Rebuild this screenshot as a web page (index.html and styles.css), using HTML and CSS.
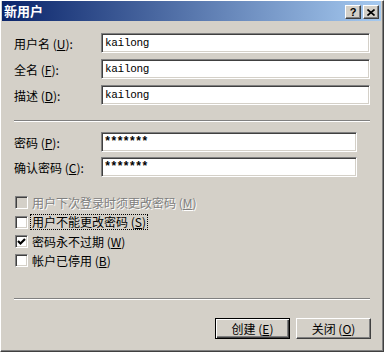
FILE: index.html
```html
<!DOCTYPE html>
<html lang="zh-CN">
<head>
  <meta charset="UTF-8" />
  <title>新用户</title>
  <link rel="stylesheet" href="styles.css">
</head>
<body>

<div class="window">
  <div class="title-bar">
    <span class="title">新用户</span>
    <div class="title-buttons">
      <span class="tbtn help">?</span>
      <span class="tbtn close">
        <svg width="8" height="7" viewBox="0 0 8 7"><path d="M0.5 0.5 L7.5 6.5 M7.5 0.5 L0.5 6.5" stroke="#000" stroke-width="1.6"/></svg>
      </span>
    </div>
  </div>

  <div class="content">
    <div class="group names">
      <div class="field"><label>用户名 (<u>U</u>):</label><div class="edit wide">kailong</div></div>
      <div class="field"><label>全名 (<u>F</u>):</label><div class="edit wide">kailong</div></div>
      <div class="field"><label>描述 (<u>D</u>):</label><div class="edit wide">kailong</div></div>
    </div>

    <div class="sep top"></div>

    <div class="group pw">
      <div class="field"><label>密码 (<u>P</u>):</label><div class="edit narrow stars">*******</div></div>
      <div class="field"><label>确认密码 (<u>C</u>):</label><div class="edit narrow stars">*******</div></div>
    </div>

    <div class="checks">
      <div class="check disabled"><span class="cb"></span><span class="text">用户下次登录时须更改密码 (<u>M</u>)</span></div>
      <div class="check"><span class="cb"></span><span class="text focus">用户不能更改密码 (<u>S</u>)</span></div>
      <div class="check"><span class="cb"><svg width="9" height="9" viewBox="0 0 9 9"><path d="M1 4 L3.5 6.5 L8 2" fill="none" stroke="#000" stroke-width="2.2"/></svg></span><span class="text">密码永不过期 (<u>W</u>)</span></div>
      <div class="check"><span class="cb"></span><span class="text">帐户已停用 (<u>B</u>)</span></div>
    </div>

    <div class="sep bottom"></div>

    <div class="buttons">
      <div class="btn default">创建 (<u>E</u>)</div>
      <div class="btn">关闭 (<u>O</u>)</div>
    </div>
  </div>
</div>

</body>
</html>
```

FILE: styles.css
```css
* { margin: 0; padding: 0; box-sizing: border-box; }

body {
  width: 384px;
  height: 352px;
  overflow: hidden;
  font-family: "Noto Sans CJK SC", "Noto Sans", sans-serif;
  font-size: 12px;
  color: #000;
  background: #d4d0c8;
}

.window {
  width: 384px;
  height: 352px;
  background: #d4d0c8;
  border: 1px solid;
  border-color: #fff #404040 #404040 #fff;
  box-shadow: inset -1px -1px #808080;
  padding: 0 2px 2px 1px;
}

.title-bar {
  height: 20px;
  display: flex;
  align-items: center;
  justify-content: space-between;
  background: linear-gradient(to right, #0a246a, #a6caf0);
  padding: 0 2px 0 2px;
}

.title {
  color: #fff;
  font-weight: bold;
  font-size: 13px;
  line-height: 20px;
}

.title-buttons {
  display: flex;
  gap: 2px;
  margin-top: 2px;
}

.tbtn {
  width: 16px;
  height: 14px;
  background: #d4d0c8;
  border: 1px solid;
  border-color: #fff #404040 #404040 #fff;
  box-shadow: inset -1px -1px #808080;
  display: flex;
  align-items: center;
  justify-content: center;
  font: bold 11px "Liberation Sans", sans-serif;
  line-height: 12px;
}

.content {
  padding: 12px 0 0 12px;
  display: flex;
  flex-direction: column;
}

.group {
  display: flex;
  flex-direction: column;
  gap: 6px;
}

.group.pw { gap: 5px; }

.field {
  display: flex;
  align-items: center;
  height: 20px;
}

.field label {
  width: 87px;
  white-space: nowrap;
}

.edit {
  height: 20px;
  background: #fff;
  border: 1px solid;
  border-color: #808080 #fff #fff #808080;
  box-shadow: inset 1px 1px #404040, inset -1px -1px #d4d0c8;
  font-family: "Liberation Mono", monospace;
  font-size: 11px;
  letter-spacing: -0.3px;
  padding-left: 3px;
  line-height: 18px;
}

.edit.stars {
  font-weight: bold;
  font-size: 12px;
  letter-spacing: -1px;
  padding-left: 2px;
}

.edit.wide { width: 269px; }
.edit.narrow { width: 256px; }

.sep {
  width: 356px;
  height: 2px;
  border-top: 1px solid #808080;
  border-bottom: 1px solid #fff;
}

.sep.top { margin: 15px 0 10px; }
.sep.bottom { margin-top: 28px; }

.checks {
  margin-top: 16px;
  display: grid;
  grid-template-rows: 19px 20px 19px 19px;
}

.check {
  display: flex;
  align-items: center;
  gap: 4px;
  padding-left: 1px;
}

.cb {
  width: 13px;
  height: 13px;
  background: #fff;
  border: 1px solid;
  border-color: #808080 #fff #fff #808080;
  box-shadow: inset 1px 1px #404040, inset -1px -1px #d4d0c8;
  display: flex;
  align-items: center;
  justify-content: center;
}

.check.disabled .cb { background: #d4d0c8; }

.check.disabled .text {
  color: #808080;
  text-shadow: 1px 1px #fff;
}

.text { line-height: 14px; white-space: nowrap; }

.text.focus {
  border: 1px dotted #000;
  padding: 0 1px;
  margin-left: -2px;
}

.buttons {
  margin-top: 18px;
  width: 357px;
  display: flex;
  justify-content: flex-end;
  gap: 6px;
}

.btn {
  width: 75px;
  height: 21px;
  background: #d4d0c8;
  border: 1px solid;
  border-color: #fff #404040 #404040 #fff;
  box-shadow: inset -1px -1px #808080;
  display: flex;
  align-items: center;
  justify-content: center;
}

.btn.default {
  border: 1px solid #000;
  box-shadow: inset 1px 1px #fff, inset -1px -1px #404040, inset -2px -2px #808080;
}
```
